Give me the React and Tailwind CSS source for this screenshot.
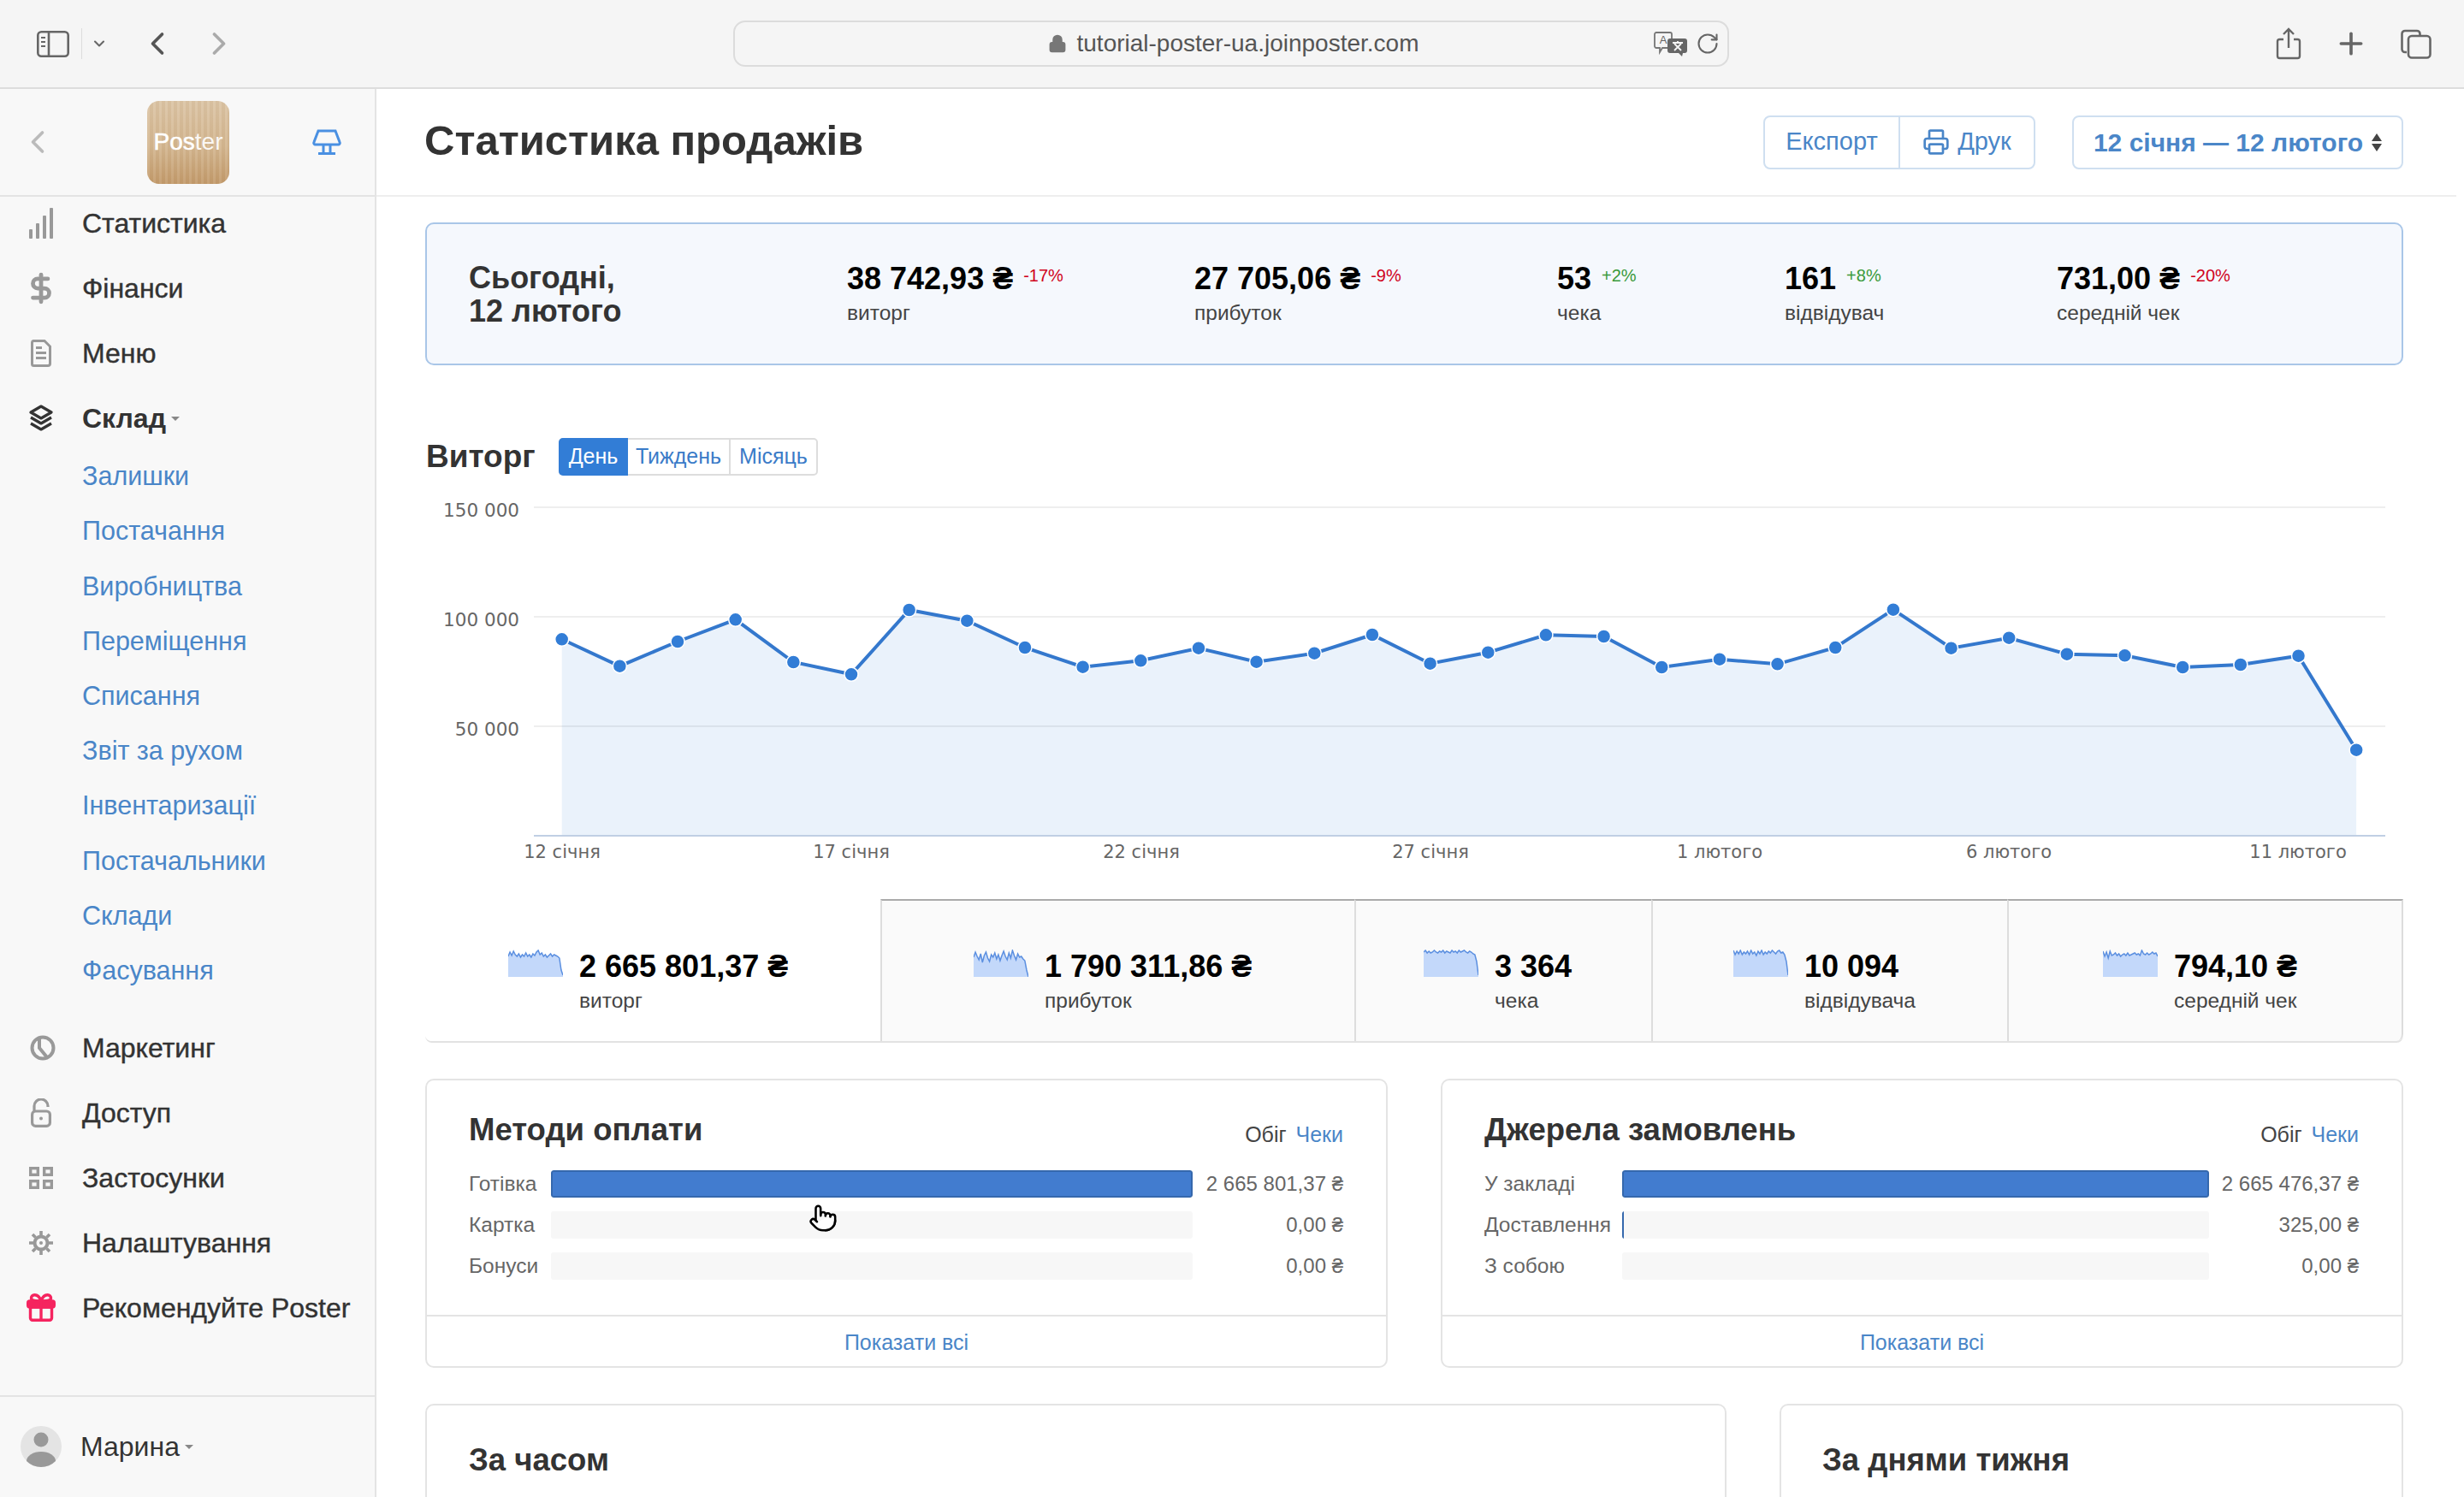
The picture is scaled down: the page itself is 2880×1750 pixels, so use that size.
import React from 'react';
import { ChevronLeft, ChevronRight, ChevronDown, Plus, Printer, DollarSign, Pointer, Lock, RotateCw } from 'lucide-react';

const chartY = [747.3, 778.7, 750, 724.3, 774, 788.3, 713, 725.7, 757, 779.7, 772.3, 757.7, 773.7, 763.7, 742, 775.7, 762.7, 742.3, 744, 780, 770.7, 776.3, 757, 712.7, 757.7, 745.7, 764.7, 766.3, 780, 777, 766.7, 876.7];
const chartPoints = chartY.map((y, i) => [656.7 + 67.66 * i, y]);
const xLabels = [
  [657, '12 січня'],
  [995, '17 січня'],
  [1334, '22 січня'],
  [1672, '27 січня'],
  [2010, '1 лютого'],
  [2348, '6 лютого'],
  [2686, '11 лютого'],
];

const menuTop = [
  { label: 'Статистика', icon: <BarsIcon /> },
  { label: 'Фінанси', icon: <DollarSign size={38} strokeWidth={3} className="text-[#999]" /> },
  { label: 'Меню', icon: <DocIcon /> },
];
const subMenu = ['Залишки', 'Постачання', 'Виробництва', 'Переміщення', 'Списання', 'Звіт за рухом', 'Інвентаризації', 'Постачальники', 'Склади', 'Фасування'];
const menuBottom = [
  { label: 'Маркетинг', icon: <PieIcon /> },
  { label: 'Доступ', icon: <OpenLockIcon /> },
  { label: 'Застосунки', icon: <GridIcon /> },
  { label: 'Налаштування', icon: <GearIcon /> },
  { label: 'Рекомендуйте Poster', icon: <GiftIcon /> },
];

const todayStats = [
  { value: '38 742,93 ₴', delta: '-17%', label: 'виторг', up: false, cls: 'w-[406px]' },
  { value: '27 705,06 ₴', delta: '-9%', label: 'прибуток', up: false, cls: 'w-[424px]' },
  { value: '53', delta: '+2%', label: 'чека', up: true, cls: 'w-[266px]' },
  { value: '161', delta: '+8%', label: 'відвідувач', up: true, cls: 'w-[318px]' },
  { value: '731,00 ₴', delta: '-20%', label: 'середній чек', up: false, cls: 'w-[300px]' },
];

const totals = [
  { value: '2 665 801,37 ₴', label: 'виторг', cls: 'w-[532px] pl-[97px] pt-[59px] bg-white rounded-bl-[8px]', spark: [8, 3, 7, 2, 6, 8, 5, 9, 6, 8, 4, 8, 6, 9, 5, 7, 3, 1, 6, 4, 8, 6, 9, 7, 5, 8, 6, 7, 8, 10, 24, 30] },
  { value: '1 790 311,86 ₴', label: 'прибуток', cls: 'w-[554px] pl-[107px] pt-[57px] bg-[#fafafa] border-t-2 border-t-[#aaa] border-l-2', spark: [9, 3, 8, 12, 5, 15, 7, 3, 10, 14, 6, 9, 4, 11, 6, 13, 7, 2, 8, 12, 4, 10, 1, 7, 12, 5, 9, 8, 11, 13, 24, 32] },
  { value: '3 364', label: 'чека', cls: 'w-[347px] pl-[79px] pt-[57px] bg-[#fafafa] border-t-2 border-t-[#aaa] border-l-2', spark: [3, 1, 4, 2, 4, 3, 1, 3, 4, 2, 3, 1, 4, 2, 3, 4, 1, 3, 2, 4, 1, 3, 2, 1, 3, 4, 2, 3, 5, 6, 14, 30] },
  { value: '10 094', label: 'відвідувача', cls: 'w-[416px] pl-[94px] pt-[57px] bg-[#fafafa] border-t-2 border-t-[#aaa] border-l-2', spark: [1, 6, 2, 5, 1, 6, 3, 5, 2, 6, 1, 5, 3, 7, 2, 5, 1, 6, 3, 5, 2, 4, 1, 3, 5, 2, 1, 4, 3, 6, 14, 30] },
  { value: '794,10 ₴', label: 'середній чек', cls: 'w-[463px] pl-[110px] pt-[57px] bg-[#fafafa] border-t-2 border-t-[#aaa] border-l-2 border-r-2 rounded-br-[8px]', spark: [2, 8, 3, 10, 2, 7, 6, 4, 7, 5, 8, 6, 5, 7, 4, 7, 6, 5, 4, 6, 5, 7, 1, 5, 6, 4, 6, 5, 3, 5, 4, 8] },
];

const payments = [
  { label: 'Готівка', amount: '2 665 801,37 ₴', fill: 'full' },
  { label: 'Картка', amount: '0,00 ₴', fill: 'none' },
  { label: 'Бонуси', amount: '0,00 ₴', fill: 'none' },
];
const sources = [
  { label: 'У закладі', amount: '2 665 476,37 ₴', fill: 'full' },
  { label: 'Доставлення', amount: '325,00 ₴', fill: 'tick' },
  { label: 'З собою', amount: '0,00 ₴', fill: 'none' },
];

function BarsIcon() {
  return (
    <svg width="28" height="36" viewBox="0 0 28 36" fill="#999">
      <rect x="0" y="25" width="4" height="11" rx="1" />
      <rect x="8" y="18" width="4" height="18" rx="1" />
      <rect x="16" y="9" width="4" height="27" rx="1" />
      <rect x="24" y="0" width="4" height="36" rx="1" />
    </svg>
  );
}

function DocIcon() {
  return (
    <svg width="24" height="32" viewBox="0 0 24 32" fill="none">
      <path d="M3 1.5h13l6.500 6.500v20a2.500 2.500 0 0 1-2.500 2.500H3.500a2 2 0 0 1-2-2v-25a2 2 0 0 1 1.500-2z" stroke="#999" strokeWidth="3" />
      <rect x="6" y="8" width="7" height="3" fill="#999" />
      <rect x="6" y="14" width="12" height="3" fill="#999" />
      <rect x="6" y="20" width="12" height="3" fill="#999" />
    </svg>
  );
}

function LayersIcon() {
  return (
    <svg width="28" height="32" viewBox="0 0 28 32" fill="none" stroke="#333" strokeWidth="3.200" strokeLinejoin="round">
      <path d="M14 2l12 7-12 7-12-7z" />
      <path d="M2 15l12 7 12-7" />
      <path d="M2 22l12 7 12-7" />
    </svg>
  );
}

function PieIcon() {
  return (
    <svg width="30" height="30" viewBox="0 0 30 30" fill="none" stroke="#999" strokeWidth="4" className="ml-[4px]">
      <circle cx="15" cy="15" r="12.500" />
      <path d="M11 2.500L11 15 20 26" />
    </svg>
  );
}

function OpenLockIcon() {
  return (
    <svg width="24" height="34" viewBox="0 0 24 34" fill="none" stroke="#999" strokeWidth="3.200">
      <path d="M4 15V9a8 8 0 0 1 16 0v1" />
      <rect x="1.600" y="15" width="20.800" height="17.400" rx="4" />
      <circle cx="12" cy="23.500" r="2" fill="#999" stroke="none" />
    </svg>
  );
}

function GridIcon() {
  return (
    <svg width="28" height="26" viewBox="0 0 28 26" fill="none" stroke="#999" strokeWidth="3.400">
      <rect x="1.700" y="1.700" width="8.600" height="7.600" />
      <rect x="17.700" y="1.700" width="8.600" height="7.600" />
      <rect x="1.700" y="16.700" width="8.600" height="7.600" />
      <rect x="17.700" y="16.700" width="8.600" height="7.600" />
    </svg>
  );
}

function GearIcon() {
  return (
    <svg width="30" height="30" viewBox="0 0 30 30" fill="none" stroke="#999">
      <circle cx="15" cy="15" r="7.500" strokeWidth="4" />
      <path d="M15 1v5M15 24v5M1 15h5M24 15h5M5 5l3.500 3.500M21.500 21.500L25 25M25 5l-3.500 3.500M8.500 21.500L5 25" strokeWidth="3.600" />
      <circle cx="15" cy="15" r="2" fill="#999" stroke="none" />
    </svg>
  );
}

function GiftIcon() {
  return (
    <svg width="34" height="33" viewBox="0 0 34 33" fill="none" stroke="#f5245f" strokeWidth="3.400" strokeLinejoin="round">
      <path d="M17 9C15 3 12 1.800 9.500 1.800 6.800 1.800 5.500 3.800 5.500 5.500 5.500 8 8 9 17 9zM17 9c2-6 5-7.200 7.500-7.200 2.700 0 4 2 4 3.700C28.500 8 26 9 17 9z" />
      <rect x="1.700" y="9" width="30.600" height="7" rx="2" fill="#f5245f" />
      <rect x="4.500" y="16" width="25" height="15.300" rx="2.500" />
      <path d="M17 9v22" />
    </svg>
  );
}

function SidebarToggle() {
  return (
    <svg width="38" height="31" viewBox="0 0 38 31" fill="none" stroke="#666" strokeWidth="2.600">
      <rect x="1.300" y="1.300" width="35.400" height="28.400" rx="4" />
      <path d="M14 1.300v28.400" />
      <path d="M5 8h5M5 13h5M5 18h5" strokeWidth="2.200" />
    </svg>
  );
}

function ShareIcon() {
  return (
    <svg width="30" height="38" viewBox="0 0 30 38" fill="none" stroke="#666" strokeWidth="2.400">
      <path d="M9 14H4.500A2.500 2.500 0 0 0 2 16.500v17A2.500 2.500 0 0 0 4.500 36h21a2.500 2.500 0 0 0 2.500-2.500v-17a2.500 2.500 0 0 0-2.500-2.500H21" />
      <path d="M15 24V2M9 8l6-6 6 6" />
    </svg>
  );
}

function TabsIcon() {
  return (
    <svg width="36" height="35" viewBox="0 0 36 35" fill="none" stroke="#666" strokeWidth="2.600">
      <path d="M7 27H5a3.500 3.500 0 0 1-3.500-3.500v-18A3.500 3.500 0 0 1 5 2h14a3.500 3.500 0 0 1 3.500 3.500V8" />
      <rect x="9" y="8" width="25.500" height="25.500" rx="4" />
    </svg>
  );
}

function TranslateIcon() {
  return (
    <svg width="40" height="30" viewBox="0 0 40 30">
      <path d="M3 2h16a2 2 0 0 1 2 2v14a2 2 0 0 1-2 2h-9l-3 5v-5H3a2 2 0 0 1-2-2V4a2 2 0 0 1 2-2z" fill="#f5f5f5" stroke="#777" strokeWidth="1.800" />
      <text x="11" y="15" fontSize="13" textAnchor="middle" fill="#666" fontFamily="Liberation Sans">A</text>
      <path d="M19 9h17a3 3 0 0 1 3 3v11a3 3 0 0 1-3 3h-2l-1 4-4-4H19a3 3 0 0 1-3-3V12a3 3 0 0 1 3-3z" fill="#666" />
      <path d="M22 14h12M28 12v2M24 23l8-8M32 23l-8-8" stroke="#f5f5f5" strokeWidth="1.800" fill="none" />
    </svg>
  );
}

function LampIcon() {
  return (
    <svg width="36" height="30" viewBox="0 0 36 30" fill="none" stroke="#4a90e2" strokeWidth="3">
      <path d="M8 2h20l5 13a2 2 0 0 1-2 3H5a2 2 0 0 1-2-3z" />
      <path d="M14 18v10M22 18v10" />
      <path d="M8 28.500h20" />
    </svg>
  );
}

function Caret() {
  return <span className="inline-block ml-[6px] w-0 h-0 border-x-[5px] border-t-[5px] border-x-transparent border-t-[#888] align-middle" />;
}

function MenuRow({ item, bold = false }) {
  return (
    <div className="h-[76px] flex items-center">
      <div className="w-[96px] flex justify-center">{item.icon}</div>
      <span className={`text-[32px] text-[#333] ${bold ? 'font-bold' : '[-webkit-text-stroke:0.4px_#333]'}`}>{item.label}</span>
      {bold && <Caret />}
    </div>
  );
}

function Sparkline({ values }) {
  const line = values.map((y, i) => `${i === 0 ? 'M' : 'L'}${(i * 64) / 31} ${y}`).join(' ');
  return (
    <svg width="64" height="32" viewBox="0 0 64 32" className="shrink-0">
      <path d={`${line} L64 32 L0 32 Z`} fill="#c3d8fa" />
      <path d={line} fill="none" stroke="#5b8fe0" strokeWidth="1.500" />
    </svg>
  );
}

function BarRow({ row, labelCls, barCls }) {
  return (
    <div className="flex items-center h-[32px] mb-[16px]">
      <div className={`${labelCls} text-[24.500px] text-[#666] whitespace-nowrap`}>{row.label}</div>
      <div className={`${barCls} h-[32px] bg-[#f7f7f7] rounded-[3px] overflow-hidden`}>
        {row.fill === 'full' && <div className="w-full h-full bg-[#427ccf] border-2 border-[#3568ad] rounded-[3px]" />}
        {row.fill === 'tick' && <div className="w-[2px] h-full bg-[#3568ad]" />}
      </div>
      <div className="flex-1 text-right text-[24px] text-[#666] whitespace-nowrap">{row.amount}</div>
    </div>
  );
}

function BreakdownCard({ title, rows, cls, labelCls, barCls }) {
  return (
    <div className={`${cls} h-[338px] border-2 border-[#e4e4e4] rounded-[10px] flex flex-col`}>
      <div className="flex-1 pl-[49px] pr-[50px]">
        <div className="flex justify-between items-end h-[105px] pb-[27px]">
          <div className="text-[36.500px] font-bold text-[#333] leading-[40px]">{title}</div>
          <div className="text-[25px] text-[#444] leading-[30px]">
            Обіг <span className="text-[#4a86c8] ml-[4px]">Чеки</span>
          </div>
        </div>
        {rows.map((row) => (
          <BarRow key={row.label} row={row} labelCls={labelCls} barCls={barCls} />
        ))}
      </div>
      <div className="h-[60px] pt-[3px] border-t-2 border-[#e4e4e4] flex items-center justify-center text-[25px] text-[#4a86c8]">Показати всі</div>
    </div>
  );
}

function Chart() {
  const line = chartPoints.map(([x, y], i) => `${i === 0 ? 'M' : 'L'}${x} ${y}`).join(' ');
  return (
    <svg width="2312" height="495" viewBox="497 556 2312 495" className="block">
      {[593, 721, 849].map((y) => (
        <line key={y} x1="624" x2="2788" y1={y} y2={y} stroke="#eeeeee" strokeWidth="2" />
      ))}
      <path d={`${line} L2754.100 977 L656.700 977 Z`} fill="#327dd6" fillOpacity="0.1" />
      <line x1="624" x2="2788" y1="977" y2="977" stroke="#c0cfe4" strokeWidth="2" />
      <path d={line} fill="none" stroke="#3478cd" strokeWidth="4" />
      {chartPoints.map(([x, y]) => (
        <circle key={x} cx={x} cy={y} r="8" fill="#327dd6" stroke="#fff" strokeWidth="1.500" />
      ))}
      <g fontFamily="DejaVu Sans" fill="#666">
        <g fontSize="21.500">
          <text x="607" y="604" textAnchor="end">150 000</text>
          <text x="607" y="732" textAnchor="end">100 000</text>
          <text x="607" y="860" textAnchor="end">50 000</text>
        </g>
        <g fontSize="21">
          {xLabels.map(([x, t]) => (
            <text key={t} x={x} y="1003" textAnchor="middle">{t}</text>
          ))}
        </g>
      </g>
    </svg>
  );
}

export default function App() {
  return (
    <div className="w-[2880px] h-[1750px] overflow-hidden flex flex-col bg-white font-['Liberation_Sans',Arial,sans-serif] text-[#333]">
      {/* browser toolbar */}
      <div className="h-[104px] shrink-0 bg-[#f5f5f5] border-b-2 border-[#dddddd] flex items-center relative">
        <div className="ml-[43px]"><SidebarToggle /></div>
        <div className="w-[1px] h-[36px] bg-[#ddd] ml-[14px]" />
        <ChevronDown size={20} strokeWidth={2.500} className="text-[#666] ml-[10px]" />
        <ChevronLeft size={44} strokeWidth={2} className="text-[#555] ml-[36px]" />
        <ChevronRight size={44} strokeWidth={2} className="text-[#aaa] ml-[28px]" />
        <div className="ml-[579px] w-[1164px] h-[54px] border-2 border-[#dcdcdc] rounded-[14px] flex items-center">
          <div className="flex-1 flex items-center justify-center gap-[12px] pl-[91px] text-[28px] text-[#555]">
            <Lock size={22} strokeWidth={2.500} fill="#777" className="text-[#777]" />
            <span>tutorial-poster-ua.joinposter.com</span>
          </div>
          <TranslateIcon />
          <RotateCw size={28} strokeWidth={1.800} className="text-[#666] ml-[9px] mr-[9px]" />
        </div>
        <div className="ml-auto flex items-center mr-[38px]">
          <ShareIcon />
          <Plus size={40} strokeWidth={2.200} className="text-[#666] ml-[38px]" />
          <div className="ml-[38px]"><TabsIcon /></div>
        </div>
      </div>

      <div className="flex-1 flex min-h-0">
        {/* sidebar */}
        <aside className="w-[440px] shrink-0 bg-[#f8f8f8] border-r-2 border-[#e4e4e4] flex flex-col">
          <div className="h-[126px] shrink-0 border-b-2 border-[#e4e4e4] flex items-center">
            <ChevronLeft size={44} strokeWidth={2} className="text-[#bbb] ml-[22px]" />
            <div className="ml-[106px] w-[96px] h-[97px] rounded-[14px] bg-[repeating-linear-gradient(90deg,rgba(255,255,255,0.07)_0px,rgba(255,255,255,0.07)_3px,rgba(120,80,30,0.05)_3px,rgba(120,80,30,0.05)_7px),linear-gradient(180deg,#dcc5a6,#d4b791_55%,#c39b6c)] flex items-center justify-center text-[28px] text-white">
              <span className="[-webkit-text-stroke:0.5px_#fff]">Pos</span><span className="opacity-90">ter</span>
            </div>
            <div className="ml-[96px]"><LampIcon /></div>
          </div>
          <div className="mt-[-7px]">
            {menuTop.map((item) => (
              <MenuRow key={item.label} item={item} />
            ))}
            <MenuRow item={{ label: 'Склад', icon: <LayersIcon /> }} bold />
          </div>
          <div className="pl-[96px] mt-[-2px]">
            {subMenu.map((label) => (
              <div key={label} className="h-[64.200px] flex items-center text-[30.500px] text-[#4a86c8]">{label}</div>
            ))}
          </div>
          <div className="mt-[20px]">
            {menuBottom.map((item) => (
              <MenuRow key={item.label} item={item} />
            ))}
          </div>
          <div className="mt-auto h-[119px] shrink-0 border-t-2 border-[#e4e4e4] flex items-center pb-[1px]">
            <div className="ml-[24px] w-[48px] h-[48px] rounded-full bg-[#e4e4e4] overflow-hidden">
              <svg width="48" height="48" viewBox="0 0 48 48" fill="#999">
                <circle cx="24" cy="16" r="8.500" />
                <ellipse cx="24" cy="41" rx="17" ry="11" />
              </svg>
            </div>
            <span className="ml-[22px] text-[32px] text-[#333]">Марина</span>
            <Caret />
          </div>
        </aside>

        {/* main */}
        <main className="flex-1 min-w-0">
          <div className="h-[126px] mr-[9px] border-b-2 border-[#eeeeee] flex items-center pl-[56px] pr-[62px]">
            <h1 className="text-[49px] font-bold text-[#333] leading-none -mt-[3px]">Статистика продажів</h1>
            <div className="ml-auto flex h-[63px] border-2 border-[#cfdff0] rounded-[8px] text-[29px] text-[#4a86c8]">
              <div className="w-[158px] flex items-center justify-center border-r-2 border-[#cfdff0]">Експорт</div>
              <div className="w-[156px] flex items-center justify-center gap-[9px]">
                <Printer size={32} strokeWidth={2} />
                Друк
              </div>
            </div>
            <div className="ml-[43px] flex items-center justify-center gap-[10px] w-[387px] h-[63px] border-2 border-[#cfdff0] rounded-[8px] text-[30px] font-bold text-[#4a86c8]">
              12 січня — 12 лютого
              <span className="flex flex-col gap-[3px]">
                <span className="w-0 h-0 border-x-[6px] border-b-[9px] border-x-transparent border-b-[#444]" />
                <span className="w-0 h-0 border-x-[6px] border-t-[9px] border-x-transparent border-t-[#444]" />
              </span>
            </div>
          </div>

          <div className="pl-[57px] w-[2369px]">
            <div className="mt-[30px] h-[167px] bg-[#f5f8fd] border-2 border-[#a9c6e8] rounded-[10px] flex items-center pl-[49px]">
              <div className="w-[442px] mt-[1px] text-[36px] font-bold leading-[39px] text-[#333]">
                Сьогодні,
                <br />
                12 лютого
              </div>
              {todayStats.map((stat) => (
                <div key={stat.label} className={`${stat.cls} shrink-0`}>
                  <div className="flex items-start leading-[40px]">
                    <span className="text-[36px] font-bold text-black">{stat.value}</span>
                    <span className={`text-[20px] ml-[12px] leading-[32px] ${stat.up ? 'text-[#3a9a3a]' : 'text-[#d0021b]'}`}>{stat.delta}</span>
                  </div>
                  <div className="text-[24.500px] text-[#444] leading-[30px] mt-[5px]">{stat.label}</div>
                </div>
              ))}
            </div>

            <div className="mt-[85px] h-[44px] flex items-center">
              <h2 className="w-[156px] pl-[1px] text-[37px] font-bold text-[#333]">Виторг</h2>
              <div className="flex h-[44px] text-[25px] rounded-[5px] border-2 border-[#dddddd] text-[#3a7bc8]">
                <div className="w-[81px] -my-[2px] -ml-[2px] bg-[#327dd6] text-white rounded-l-[5px] flex items-center justify-center">День</div>
                <div className="w-[120px] border-r-2 border-[#dddddd] flex items-center justify-center">Тиждень</div>
                <div className="w-[100px] flex items-center justify-center">Місяць</div>
              </div>
            </div>

            <Chart />

            <div className="flex h-[168px] border-b-2 border-[#e2e2e2] rounded-b-[8px]">
              {totals.map((t) => (
                <div key={t.label} className={`${t.cls} shrink-0 border-[#dddddd] flex gap-[19px]`}>
                  <Sparkline values={t.spark} />
                  <div>
                    <div className="text-[36px] font-bold text-black leading-[40px]">{t.value}</div>
                    <div className="text-[24.500px] text-[#444] leading-[30px] mt-[5px]">{t.label}</div>
                  </div>
                </div>
              ))}
            </div>

            <div className="mt-[42px] flex gap-[62px]">
              <BreakdownCard title="Методи оплати" rows={payments} cls="w-[1125px]" labelCls="w-[96px]" barCls="w-[750px]" />
              <BreakdownCard title="Джерела замовлень" rows={sources} cls="w-[1125px]" labelCls="w-[161px]" barCls="w-[686px]" />
            </div>

            <div className="mt-[42px] flex gap-[62px]">
              <div className="w-[1521px] h-[200px] shrink-0 border-2 border-[#e4e4e4] rounded-[10px] pl-[49px] pt-[37px] text-[36.500px] font-bold text-[#333]">За часом</div>
              <div className="w-[729px] h-[200px] shrink-0 border-2 border-[#e4e4e4] rounded-[10px] pl-[48px] pt-[37px] text-[36.500px] font-bold text-[#333]">За днями тижня</div>
            </div>
          </div>
        </main>
      </div>

      {/* cursor over the first card */}
      <Pointer size={34} strokeWidth={1.800} fill="#fff" className="absolute left-[945px] top-[1407px] text-black" />
    </div>
  );
}
